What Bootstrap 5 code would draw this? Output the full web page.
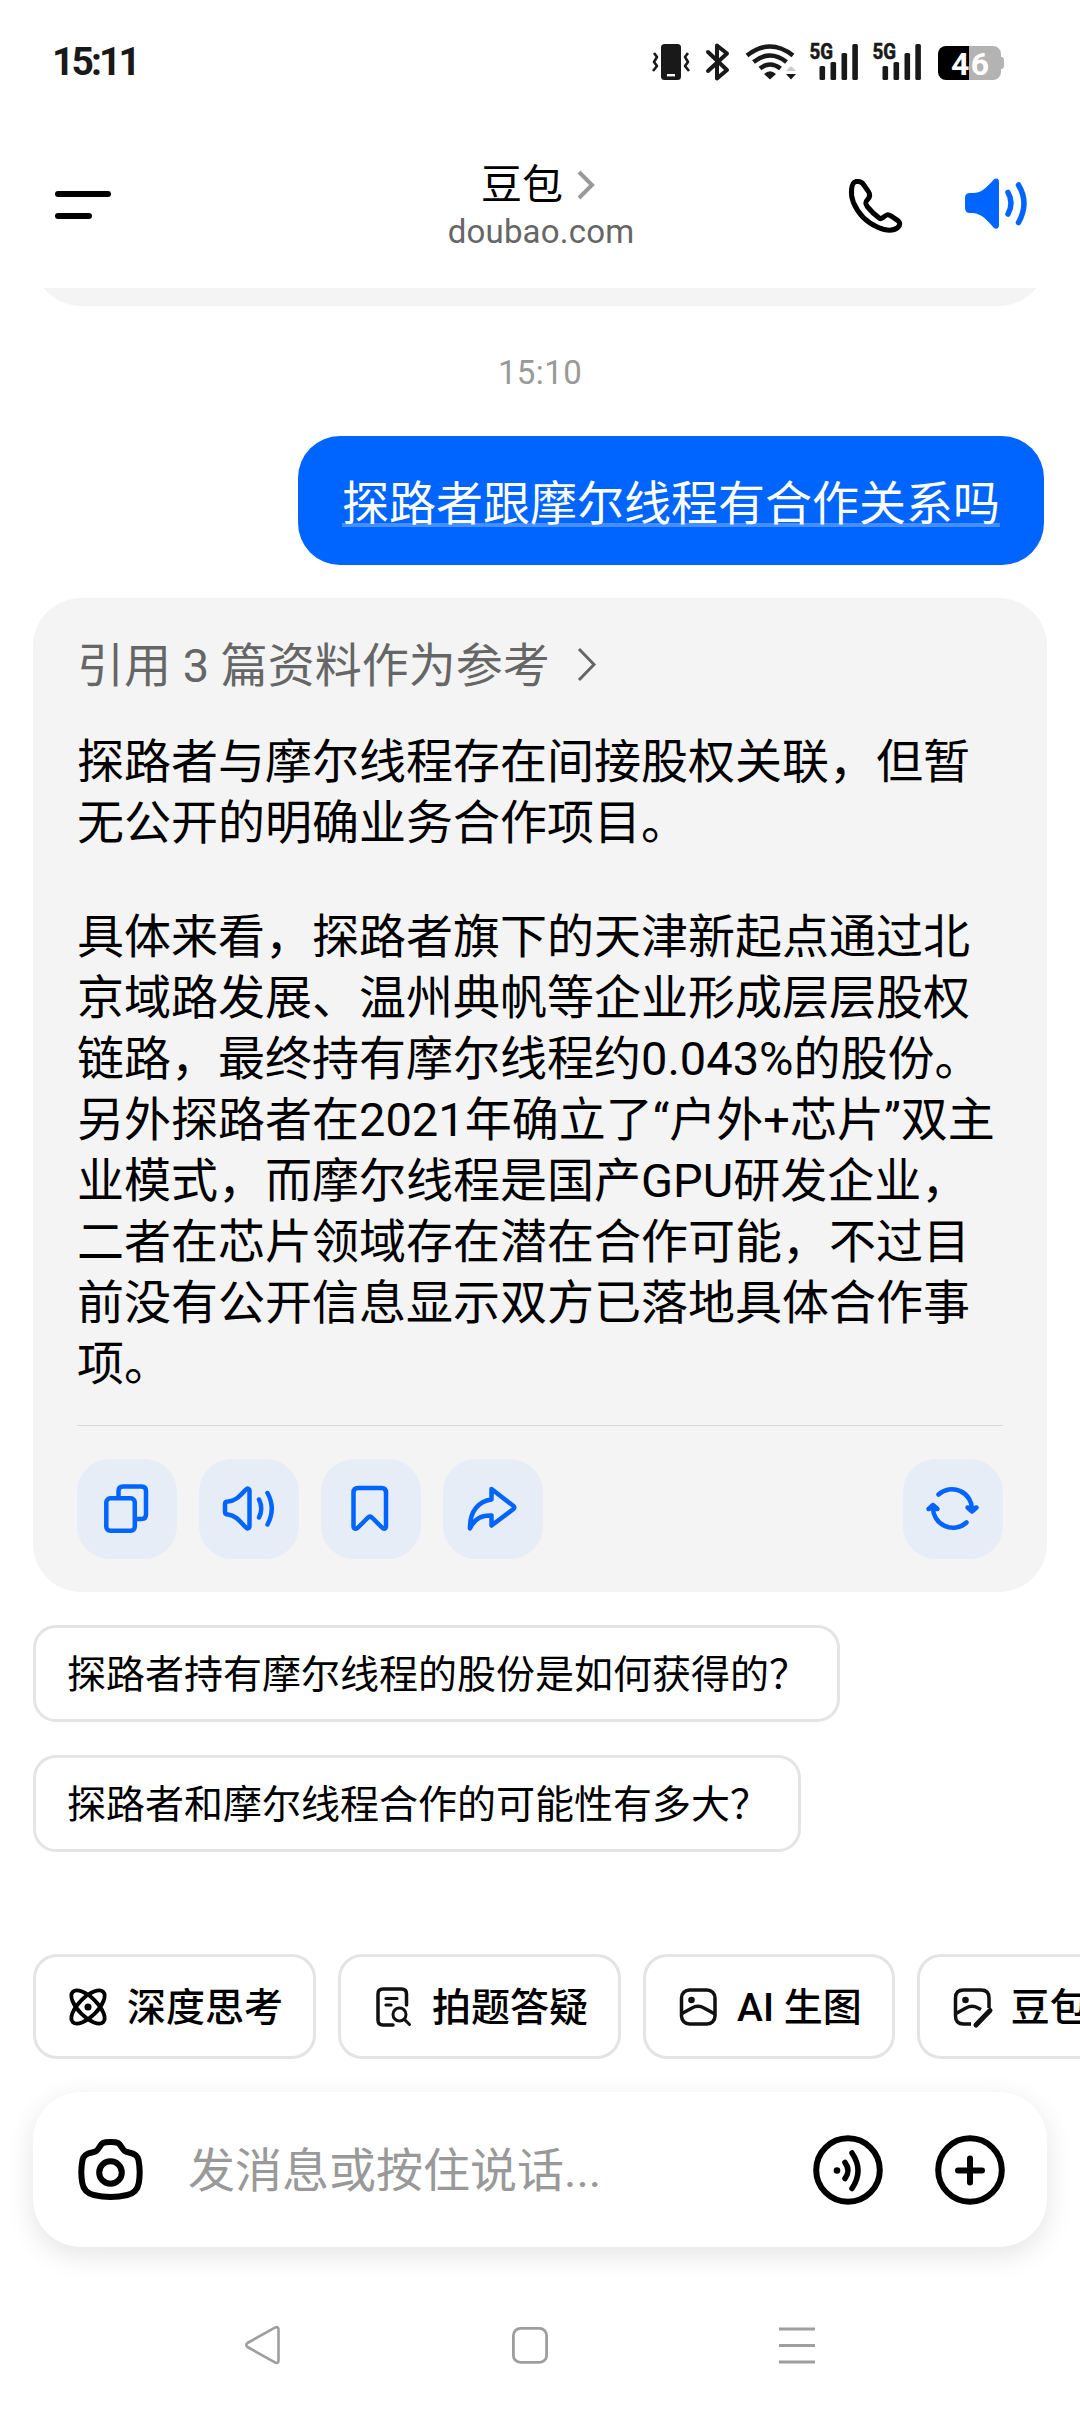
<!DOCTYPE html>
<html lang="zh-CN">
<head>
<meta charset="utf-8">
<meta name="viewport" content="width=device-width, initial-scale=1">
<title>豆包</title>
<link href="https://cdn.jsdelivr.net/npm/bootstrap@5.3.0/dist/css/bootstrap.min.css" rel="stylesheet">
<style>
  body { font-family: Roboto, "Noto Sans CJK SC", sans-serif; color: #000; background: #fff; }
  svg { display: block; flex: none; overflow: visible; }
  .phone { width: 1080px; height: 2412px; }
  .statusbar { height: 120px; padding: 0 76px 0 52px; color: #191919; }
  .clock { font-size: 39px; font-weight: 700; line-height: 40px; letter-spacing: -2.9px; margin-top: 42px; }
  .status-icons { margin-top: 40px; }
  .topbar { height: 168px; padding: 0 53px 0 55px; }
  .top-side { width: 180px; }
  .title-line { font-size: 41px; line-height: 50px; margin: 40px 7px 0 0; }
  .site { font-size: 33px; line-height: 36px; color: #666; letter-spacing: .2px; margin-top: 4px; }
  .chat { padding: 0 33px; height: 1564px; }
  .prev-clip { height: 18px; }
  .prev-card { height: 96px; margin-top: -78px; border-radius: 48px; background: #f4f4f4; }
  .stamp { font-size: 33px; line-height: 40px; color: #999; margin-top: 47px; letter-spacing: .4px; }
  .bubble { background: #0065ff; color: #fff; border-radius: 42px; height: 129px; margin: 43px 3px 0 0; padding: 39px 44px 0; font-size: 47px; line-height: 58px; }
  .bubble-text { height: 52px; border-bottom: 4px solid rgba(255,255,255,.27); }
  .answer { margin-top: 33px; height: 994px; border-radius: 48px; background: #f4f4f4; padding: 0 44px; font-size: 47px; line-height: 61px; }
  .refs { color: #666; margin-top: 37px; gap: 27px; height: 61px; }
  .answer p { margin: 0; white-space: nowrap; }
  .p-first { padding-top: 35px; }
  .p-second { padding-top: 53px; }
  .actions { border-top: 1px solid #d8d8d8; padding-top: 33px; margin: auto 0 33px; gap: 22px; }
  .act { width: 100px; height: 100px; border-radius: 33px; background: #e6edf7; }
  .ask { height: 97px; border: 3px solid #e4e4e4; border-radius: 23px; padding: 3px 29px 0 31px; font-size: 39px; white-space: nowrap; background: #fff; }
  .asks { margin-top: 33px; gap: 33px; }
  .chips { padding: 0 33px; gap: 22px; margin-top: 102px; width: 1300px; }
  .chip { height: 105px; border: 3px solid #e4e4e4; border-radius: 24px; padding: 0 30px 0 31px; gap: 18px; font-size: 39px; font-weight: 500; white-space: nowrap; }
  .chip span { padding-top: 3px; }
  .composer { margin: 33px 33px 0; height: 155px; border-radius: 48px; padding: 0 42px 0 44px; box-shadow: 0 8px 28px rgba(0,0,0,.11); background: #fff; }
  .composer-tools { gap: 52px; }
  .hint { font-size: 47px; color: #999; margin-left: 44px; padding-top: 3px; }
  .sysnav { height: 165px; padding: 31px 265px 0 245px; }
</style>
</head>
<body>
<div class="phone d-flex flex-column overflow-hidden">

  <div class="statusbar d-flex justify-content-between align-items-start flex-shrink-0">
    <div class="clock">15:11</div>
    <svg class="status-icons" width="352" height="44" viewBox="652 40 352 44">
      <rect x="661" y="44" width="20" height="36" rx="3.5" fill="#191919"/>
      <rect x="667" y="74" width="8" height="2.4" fill="#fff"/>
      <g fill="none" stroke="#191919" stroke-width="2.6" stroke-linejoin="round">
        <path d="M654 53l3 4-3 5 3 4-4 5"/><path d="M688 53l-3 4 3 5-3 4 4 5"/>
      </g>
      <path d="M708 52l19 18-10 8.500V45.500L727 53.500 708 71" fill="none" stroke="#191919" stroke-width="4" stroke-linecap="round" stroke-linejoin="round"/>
      <g fill="none" stroke="#191919" stroke-width="4.600">
        <path d="M747 55.500q23-18 46 0"/><path d="M753.500 62q16.500-13 33 0"/><path d="M760 68.500q10-8 20.500 0"/>
      </g>
      <path d="M764 74q6-5.500 12 0l-6 5.500z" fill="#191919"/>
      <path d="M786 71l5-5 5 5z" fill="#ccc"/><path d="M786 74h10l-5 5.500z" fill="#191919"/>
      <g fill="#191919">
        <text x="809.500" y="59" font-family="Roboto" font-weight="700" font-size="21.500" stroke="#191919" stroke-width=".6" textLength="23.500" lengthAdjust="spacingAndGlyphs">5G</text>
        <rect x="819.500" y="66" width="5.600" height="14" rx="1.500"/><rect x="830.500" y="62" width="5.600" height="18" rx="1.500"/><rect x="841.500" y="53" width="5.600" height="27" rx="1.500"/><rect x="852.300" y="44" width="5.600" height="36" rx="1.500"/>
        <text x="872.500" y="59" font-family="Roboto" font-weight="700" font-size="21.500" stroke="#191919" stroke-width=".6" textLength="23.500" lengthAdjust="spacingAndGlyphs">5G</text>
        <rect x="882.500" y="66" width="5.600" height="14" rx="1.500"/><rect x="893.500" y="62" width="5.600" height="18" rx="1.500"/><rect x="904.500" y="53" width="5.600" height="27" rx="1.500"/><rect x="915.300" y="44" width="5.600" height="36" rx="1.500"/>
      </g>
      <path d="M969 46h24a8 8 0 0 1 8 8v3q3 0 3 3v6q0 3-3 3v3a8 8 0 0 1-8 8h-24z" fill="#b3b3b3"/>
      <path d="M969 46h-23a8 8 0 0 0-8 8v18a8 8 0 0 0 8 8h23z" fill="#000"/>
      <text x="951" y="74.500" font-family="Roboto" font-weight="700" font-size="32" textLength="38" fill="#fff">46</text>
    </svg>
  </div>

  <header class="topbar d-flex justify-content-between flex-shrink-0">
    <div class="top-side d-flex align-items-start">
      <svg width="57" height="99" viewBox="0 0 57 99" stroke="#000" stroke-width="6" stroke-linecap="round"><path d="M3 74h50M3 96h31"/></svg>
    </div>
    <div class="text-center">
      <div class="title-line d-flex justify-content-center align-items-center">
        <span>豆包</span>
        <svg width="17" height="30" viewBox="0 0 17 30" fill="none" stroke="#999" stroke-width="4" style="margin-left:14px"><path d="M2 2l13 13L2 28"/></svg>
      </div>
      <div class="site">doubao.com</div>
    </div>
    <div class="top-side d-flex justify-content-end align-items-start">
      <svg width="179" height="112" viewBox="848 120 179 112">
        <path d="M857.800 181.500c2.600-.2 4 .7 5.500 2.700l5 7.200c2.500 3.600 1.500 5.800-.7 8.200-2.500 2.600-2.400 4.300-.3 7 4 5 7.500 8.300 12.500 12 1 .5 1.500.3 2.500-.6 4.500-3.800 5.500-4 9-1.800l5.500 3.600c4 2.600 3.400 5.400 1 7.700-4.500 3.700-12.500 3-20-.3-12-5.200-20.500-15.500-24.500-25-3.500-9.300-1.800-19.500 2.400-20.600z" fill="none" stroke="#000" stroke-width="5" stroke-linejoin="round"/>
        <path d="M965 198q0-5 5-5h3c9 0 14-6 20.500-13.200 2-2.200 5.500-1.800 5.500 2.200v43c0 4-3.500 4.800-5.500 2.500C987 220 982 214 973 213h-3q-5 0-5-5z" fill="#0065ff"/>
        <path d="M1008 192.500q6 10.500 0 21.500M1018.500 185q11 18 0 37.500" fill="none" stroke="#0065ff" stroke-width="5.500" stroke-linecap="round"/>
      </svg>
    </div>
  </header>

  <main class="chat flex-shrink-0">
    <div class="prev-clip overflow-hidden"><div class="prev-card"></div></div>
    <div class="stamp text-center">15:10</div>
    <div class="d-flex justify-content-end">
      <div class="bubble"><div class="bubble-text text-nowrap">探路者跟摩尔线程有合作关系吗</div></div>
    </div>

    <section class="answer d-flex flex-column">
      <div class="refs d-flex align-items-center">
        <span>引用 3 篇资料作为参考</span>
        <svg width="19" height="33" viewBox="0 0 19 33" fill="none" stroke="#666" stroke-width="3"><path d="M2 0l15 15.500L2 31"/></svg>
      </div>
      <p class="p-first">探路者与摩尔线程存在间接股权关联，但暂<br>无公开的明确业务合作项目。</p>
      <p class="p-second">具体来看，探路者旗下的天津新起点通过北<br>京域路发展、温州典帆等企业形成层层股权<br>链路，最终持有摩尔线程约0.043%的股份。<br>另外探路者在2021年确立了“户外+芯片”双主<br>业模式，而摩尔线程是国产GPU研发企业，<br>二者在芯片领域存在潜在合作可能，不过目<br>前没有公开信息显示双方已落地具体合作事<br>项。</p>
      <div class="actions d-flex">
        <div class="act">
          <svg width="100" height="100" viewBox="0 0 100 100" fill="none" stroke="#0065ff" stroke-width="4.500" stroke-linejoin="round"><rect x="29.300" y="39.300" width="28.500" height="32.500" rx="4"/><path d="M41.500 39V32q0-4.500 4.500-4.500h18.500q4.500 0 4.500 4.500v23.500q0 4.500-4.500 4.500H59"/></svg>
        </div>
        <div class="act">
          <svg width="100" height="100" viewBox="0 0 100 100" fill="none" stroke="#0065ff" stroke-width="4.500" stroke-linejoin="round" stroke-linecap="round"><path d="M26 45q0-2.500 3-2.500c8-.5 12-6 18-12 1.500-1.500 3.500-1 3.500 1.500v35c0 2.500-2 3-3.500 1.500-6-6-10-12-18-13-2 0-3-1-3-3z"/><path d="M60 40.500q4.500 9 0 18M68.500 34q8.500 15.500 0 31.500"/></svg>
        </div>
        <div class="act">
          <svg width="100" height="100" viewBox="0 0 100 100" fill="none" stroke="#0065ff" stroke-width="4.500" stroke-linejoin="round"><path d="M32.500 33.500q0-4.500 4.500-4.500h23.500q4.500 0 4.500 4.500V67c0 3-2 3.500-4 1.500L51.500 59q-2.500-2.500-5 0l-9.500 9.500c-2 2-4.500 1.500-4.500-1.500z"/></svg>
        </div>
        <div class="act">
          <svg width="100" height="100" viewBox="0 0 100 100" fill="none" stroke="#0065ff" stroke-width="4.500" stroke-linejoin="round"><path d="M48.500 30l22 17q1.500 1.500 0 3l-22 16.500V56.500C38 56 31 60 27 69.500 26.500 52 36 42 48.500 40.500z"/></svg>
        </div>
        <div class="act ms-auto">
          <svg width="100" height="100" viewBox="0 0 100 100" fill="none" stroke="#0065ff" stroke-width="4.500" stroke-linecap="round" stroke-linejoin="round"><path d="M35.500 35.500A20 20 0 0 1 69 51M63.500 63.500A20 20 0 0 1 30 48"/><path d="M64.500 48.500l4.500 4 4.500-4-4.500 1.500zM25.500 50l4.500-4 4.500 4-4.500-1.500z" fill="#0065ff"/></svg>
        </div>
      </div>
    </section>

    <div class="asks d-flex flex-column align-items-start">
      <div class="ask d-flex align-items-center">探路者持有摩尔线程的股份是如何获得的？</div>
      <div class="ask d-flex align-items-center">探路者和摩尔线程合作的可能性有多大？</div>
    </div>
  </main>

  <div class="chips d-flex flex-shrink-0">
    <div class="chip d-flex align-items-center">
      <svg width="42" height="42" viewBox="0 0 42 42" fill="none" stroke="#000" stroke-width="3.800"><ellipse cx="21" cy="21" rx="21.500" ry="9.500" transform="rotate(45 21 21)"/><ellipse cx="21" cy="21" rx="21.500" ry="9.500" transform="rotate(-45 21 21)"/><circle cx="21" cy="21" r="3.500" fill="#000" stroke="none"/></svg>
      <span>深度思考</span>
    </div>
    <div class="chip d-flex align-items-center">
      <svg width="42" height="42" viewBox="0 0 42 42" fill="none" stroke="#111" stroke-width="3.500" stroke-linecap="round"><path d="M34.500 19V8q0-5-5-5H11Q6 3 6 8v26q0 5 5 5h10"/><path d="M14 12.500h11M14 19h5" stroke-width="3.200"/><circle cx="27.500" cy="28.500" r="6.500" stroke-width="3"/><path d="M32.500 33.500l5 5" stroke-width="3"/></svg>
      <span>拍题答疑</span>
    </div>
    <div class="chip d-flex align-items-center">
      <svg width="42" height="42" viewBox="0 0 42 42" fill="none" stroke="#111" stroke-width="3.500"><rect x="4.500" y="4" width="33.500" height="34" rx="8"/><circle cx="14.500" cy="14" r="3.300" fill="#111" stroke="none"/><path d="M5 27.500l10-5.500q6-3.500 12 0l11 6"/></svg>
      <span>AI 生图</span>
    </div>
    <div class="chip d-flex align-items-center">
      <svg width="42" height="42" viewBox="0 0 42 42" fill="none" stroke="#111" stroke-width="3.500"><path d="M38 22V12q0-8-8-8H12.500q-8 0-8 8v18q0 8 8 8H20"/><circle cx="14.500" cy="14" r="3.300" fill="#111" stroke="none"/><path d="M5 27.500l10-5.500q6-3.500 12 0l3 1.500"/><path d="M25 39l14-14.500" stroke-width="5" stroke-linecap="round"/></svg>
      <span>豆包</span>
    </div>
  </div>

  <div class="composer d-flex align-items-center flex-shrink-0">
    <svg width="67" height="64" viewBox="0 0 67 64" fill="none" stroke="#000" stroke-width="6" stroke-linejoin="round"><path d="M33.500 4c8 0 8.500 1 11 5 2.500 4 3 4.500 7.500 5.500 6 1.200 8.500 3 9.500 7.500 1.300 7 1.500 16 .3 23-1.200 7-5 10.500-11.500 12-10 2.300-23.500 2.300-33.500 0C10.300 55.500 6.500 52 5.300 45 4 38 4.200 29 5.500 22c1-4.500 3.500-6.300 9.500-7.500 4.500-1 5-1.500 7.500-5.500 2.500-4 3-5 11-5z"/><circle cx="33.500" cy="34.500" r="11.300"/></svg>
    <div class="hint">发消息或按住说话...</div>
    <div class="composer-tools d-flex ms-auto">
      <svg width="70" height="70" viewBox="0 0 70 70" fill="none" stroke="#000" stroke-width="5.500" stroke-linecap="round"><circle cx="35" cy="35" r="31.800" stroke-width="6"/><circle cx="24" cy="35.500" r="3.300" fill="#000" stroke="none"/><path d="M32 27.500q6 8 0 16M39 18q12 17.500 0 35.500"/></svg>
      <svg width="70" height="70" viewBox="0 0 70 70" fill="none" stroke="#000" stroke-width="6" stroke-linecap="round"><circle cx="35" cy="35" r="31.800"/><path d="M35 23.500v24M23 35.500h24"/></svg>
    </div>
  </div>

  <div class="sysnav d-flex justify-content-between align-items-center flex-shrink-0">
    <svg width="35" height="44" viewBox="0 0 35 44" fill="none" stroke="#9e9e9e" stroke-width="2.600" stroke-linejoin="round"><path d="M2.500 20L29.500 4.800q4-2 4 1.700v31q0 3.700-4 1.700L2.500 24q-2.500-2 0-4z"/></svg>
    <svg width="36" height="37" viewBox="0 0 36 37" fill="none" stroke="#9e9e9e" stroke-width="2.800"><rect x="1.400" y="1.400" width="33.200" height="34" rx="7"/></svg>
    <svg width="36" height="37" viewBox="0 0 36 37" stroke="#9e9e9e" stroke-width="3"><path d="M0 2h36M0 18.500h36M0 35h36"/></svg>
  </div>
</div>
<script src="https://cdn.jsdelivr.net/npm/bootstrap@5.3.0/dist/js/bootstrap.bundle.min.js"></script>
</body>
</html>
